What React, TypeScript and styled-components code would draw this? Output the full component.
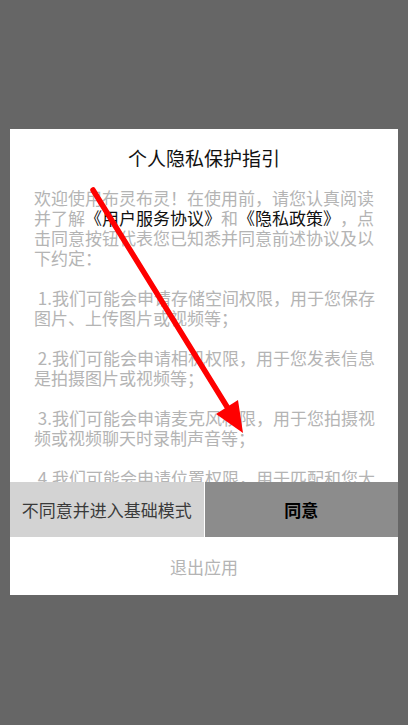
import React from 'react';
import styled, { createGlobalStyle } from 'styled-components';

const GlobalStyle = createGlobalStyle`
  html, body {
    margin: 0;
    padding: 0;
    height: 100%;
    background: #666666;
  }
  #root {
    height: 100%;
  }
  * {
    box-sizing: border-box;
  }
`;

const Screen = styled.div`
  position: relative;
  height: 725px;
  width: 408px;
  display: flex;
  align-items: flex-start;
  justify-content: center;
  padding-top: 129px;
  background: #666666;
  font-family: "Noto Sans CJK SC", "Noto Sans", sans-serif;
`;

const Dialog = styled.div`
  width: 388px;
  height: 466px;
  background: #ffffff;
  display: flex;
  flex-direction: column;
`;

const Title = styled.div`
  height: 59px;
  line-height: 58px;
  text-align: center;
  font-size: 19px;
  color: #111111;
`;

const Body = styled.div`
  flex: 1;
  overflow: hidden;
  padding: 0 18px 0 24px;
`;

const Paragraph = styled.p`
  margin: 0 0 20px;
  font-size: 17px;
  line-height: 20px;
  color: #b4b4b4;
  word-break: break-all;
  text-spacing-trim: space-all;
`;

const Link = styled.span`
  color: #111111;
`;

const ButtonRow = styled.div`
  display: flex;
  height: 55px;
  gap: 1px;
  background: #ffffff;
`;

const ChoiceButton = styled.button<{ $primary?: boolean }>`
  flex: 1;
  border: none;
  margin: 0;
  padding: 0;
  font-family: inherit;
  font-size: 17px;
  background: ${(p) => (p.$primary ? '#8c8c8c' : '#d3d3d3')};
  color: ${(p) => (p.$primary ? '#000000' : '#3a3a3a')};
  font-weight: ${(p) => (p.$primary ? 700 : 400)};
`;

const ExitButton = styled.div`
  height: 58px;
  display: flex;
  align-items: center;
  justify-content: center;
  font-size: 17px;
  color: #b4b4b4;
`;

const ArrowLayer = styled.svg`
  position: absolute;
  left: 0;
  top: 0;
  pointer-events: none;
`;

const App: React.FC = () => {
  return (
    <Screen>
      <GlobalStyle />
      <Dialog>
        <Title>个人隐私保护指引</Title>
        <Body>
          <Paragraph>
            欢迎使用布灵布灵！在使用前，请您认真阅读并了解
            <Link>《用户服务协议》</Link>和<Link>《隐私政策》</Link>
            ，点击同意按钮代表您已知悉并同意前述协议及以下约定：
          </Paragraph>
          <Paragraph>&nbsp;1.我们可能会申请存储空间权限，用于您保存图片、上传图片或视频等；</Paragraph>
          <Paragraph>&nbsp;2.我们可能会申请相机权限，用于您发表信息是拍摄图片或视频等；</Paragraph>
          <Paragraph>&nbsp;3.我们可能会申请麦克风权限，用于您拍摄视频或视频聊天时录制声音等；</Paragraph>
          <Paragraph>&nbsp;4.我们可能会申请位置权限，用于匹配和您大致位置相关的内容等；</Paragraph>
        </Body>
        <ButtonRow>
          <ChoiceButton>不同意并进入基础模式</ChoiceButton>
          <ChoiceButton $primary>同意</ChoiceButton>
        </ButtonRow>
        <ExitButton>退出应用</ExitButton>
      </Dialog>
      <ArrowLayer width="408" height="725" viewBox="0 0 408 725">
        <line x1="93" y1="190" x2="229" y2="410" stroke="#ff0000" strokeWidth="5.5" strokeLinecap="round" />
        <polygon points="243,433 238,400 216,414" fill="#ff0000" />
      </ArrowLayer>
    </Screen>
  );
};

export default App;
